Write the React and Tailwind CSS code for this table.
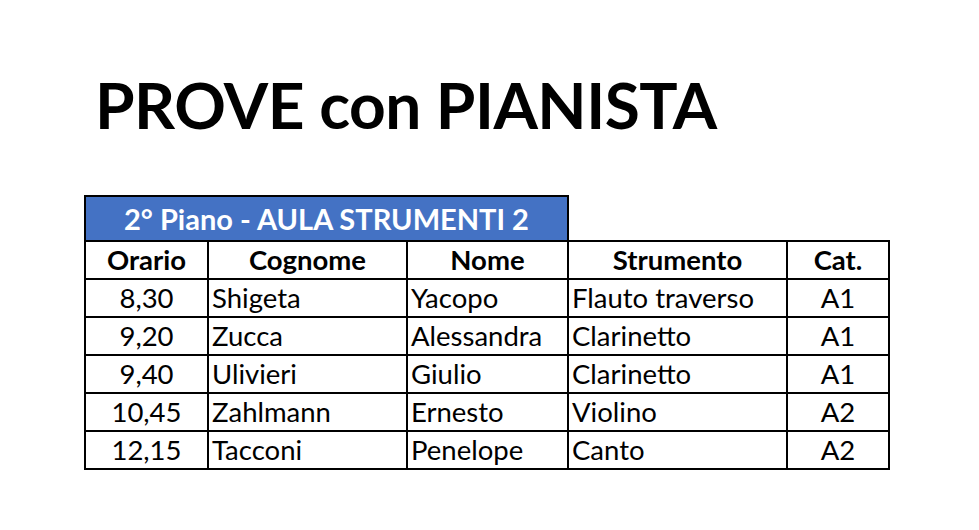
import React from "react";

const rows = [
  ["8,30", "Shigeta", "Yacopo", "Flauto traverso", "A1"],
  ["9,20", "Zucca", "Alessandra", "Clarinetto", "A1"],
  ["9,40", "Ulivieri", "Giulio", "Clarinetto", "A1"],
  ["10,45", "Zahlmann", "Ernesto", "Violino", "A2"],
  ["12,15", "Tacconi", "Penelope", "Canto", "A2"],
];

const cell = "border-2 border-black h-[38px] p-0 leading-none";

export default function App() {
  return (
    <div
      className="w-[979px] h-[530px] bg-white text-black overflow-hidden"
      style={{ fontFamily: "Lato, 'Open Sans', sans-serif" }}
    >
      <h1 className="pl-[95px] pt-[70px] text-[64px] font-bold leading-[70px] tracking-[-0.5px]">
        PROVE con PIANISTA
      </h1>

      <table className="ml-[84px] mt-[55px] border-collapse table-fixed text-[27.5px]">
        <colgroup>
          <col className="w-[123px]" />
          <col className="w-[199px]" />
          <col className="w-[161px]" />
          <col className="w-[219px]" />
          <col className="w-[102px]" />
        </colgroup>
        <tbody>
          <tr>
            <td
              colSpan={3}
              className="border-2 border-black h-[45px] bg-[#4472c4] text-white font-bold text-center text-[29px] p-0 leading-none"
            >
              2° Piano - AULA STRUMENTI 2
            </td>
            <td colSpan={2} className="p-0"></td>
          </tr>
          <tr className="font-bold">
            <td className={`${cell} text-center`}>Orario</td>
            <td className={`${cell} text-center`}>Cognome</td>
            <td className={`${cell} text-center`}>Nome</td>
            <td className={`${cell} text-center`}>Strumento</td>
            <td className={`${cell} text-center`}>Cat.</td>
          </tr>
          {rows.map((r) => (
            <tr key={r[0]}>
              <td className={`${cell} text-center`}>{r[0]}</td>
              <td className={`${cell} pl-[3px]`}>{r[1]}</td>
              <td className={`${cell} pl-[3px]`}>{r[2]}</td>
              <td className={`${cell} pl-[3px]`}>{r[3]}</td>
              <td className={`${cell} text-center`}>{r[4]}</td>
            </tr>
          ))}
        </tbody>
      </table>
    </div>
  );
}
